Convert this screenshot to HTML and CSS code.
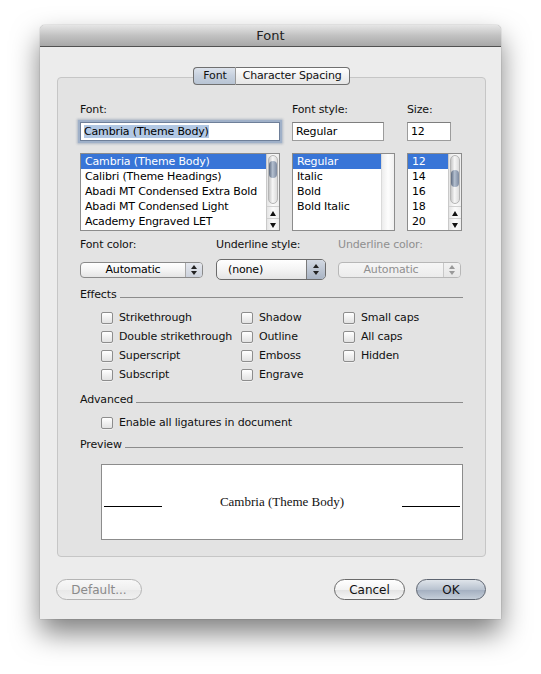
FILE: index.html
```html
<!DOCTYPE html>
<html>
<head>
<meta charset="utf-8">
<link rel="stylesheet" href="styles.css">
</head>
<body>
<div class="window">
  <div class="titlebar">Font</div>
  <div class="wbody">
    <div class="tabs">
      <span class="seg sel">Font</span><span class="seg">Character Spacing</span>
    </div>
    <div class="panel">
      <div class="top-grid">
        <div class="lbl">Font:</div>
        <div class="lbl">Font style:</div>
        <div class="lbl">Size:</div>

        <div class="field focus w-font"><span class="selected-text">Cambria (Theme Body)</span></div>
        <div class="field w-style">Regular</div>
        <div class="field w-size">12</div>

        <div class="list">
          <div class="rows">
            <div class="row sel">Cambria (Theme Body)</div>
            <div class="row">Calibri (Theme Headings)</div>
            <div class="row">Abadi MT Condensed Extra Bold</div>
            <div class="row">Abadi MT Condensed Light</div>
            <div class="row">Academy Engraved LET</div>
          </div>
          <div class="sbar">
            <div class="track"><div class="thumb"></div></div>
            <div class="arrow up"></div>
            <div class="arrow down"></div>
          </div>
        </div>
        <div class="list">
          <div class="rows">
            <div class="row sel">Regular</div>
            <div class="row">Italic</div>
            <div class="row">Bold</div>
            <div class="row">Bold Italic</div>
          </div>
          <div class="sbar empty"></div>
        </div>
        <div class="list">
          <div class="rows">
            <div class="row sel">12</div>
            <div class="row">14</div>
            <div class="row">16</div>
            <div class="row">18</div>
            <div class="row">20</div>
          </div>
          <div class="sbar">
            <div class="track"><div class="thumb low"></div></div>
            <div class="arrow up"></div>
            <div class="arrow down"></div>
          </div>
        </div>
      </div>

      <div class="pop-grid">
        <div class="lbl">Font color:</div>
        <div class="lbl">Underline style:</div>
        <div class="lbl dis">Underline color:</div>

        <div class="popup center"><span class="ptext">Automatic</span><span class="parrows"></span></div>
        <div class="popup big"><span class="ptext">(none)</span><span class="parrows"></span></div>
        <div class="popup center disabled"><span class="ptext">Automatic</span><span class="parrows"></span></div>
      </div>

      <div class="heading">Effects</div>
      <div class="effects">
        <label class="cb"><span class="box"></span>Strikethrough</label>
        <label class="cb"><span class="box"></span>Shadow</label>
        <label class="cb"><span class="box"></span>Small caps</label>
        <label class="cb"><span class="box"></span>Double strikethrough</label>
        <label class="cb"><span class="box"></span>Outline</label>
        <label class="cb"><span class="box"></span>All caps</label>
        <label class="cb"><span class="box"></span>Superscript</label>
        <label class="cb"><span class="box"></span>Emboss</label>
        <label class="cb"><span class="box"></span>Hidden</label>
        <label class="cb"><span class="box"></span>Subscript</label>
        <label class="cb"><span class="box"></span>Engrave</label>
      </div>

      <div class="heading adv">Advanced</div>
      <div class="effects single">
        <label class="cb"><span class="box"></span>Enable all ligatures in document</label>
      </div>

      <div class="heading prev">Preview</div>
      <div class="preview">
        <span class="pline"></span>
        <span class="ptxt">Cambria (Theme Body)</span>
        <span class="pline"></span>
      </div>
    </div>

    <div class="buttons">
      <button class="btn default-btn">Default...</button>
      <div class="spacer"></div>
      <button class="btn cancel">Cancel</button>
      <button class="btn ok">OK</button>
    </div>
  </div>
</div>
</body>
</html>
```

FILE: styles.css
```css
html, body {
  margin: 0;
  padding: 0;
  background: #ffffff;
}
body {
  width: 541px;
  height: 674px;
  overflow: hidden;
  font-family: "DejaVu Sans", "Liberation Sans", sans-serif;
  font-size: 11px;
  letter-spacing: -0.15px;
  color: #000;
}
.window {
  margin-left: 40px;
  margin-top: 25px;
  width: 461px;
  height: 594px;
  background: #ececec;
  border-radius: 5px 5px 0 0;
  box-shadow: 0 14px 28px rgba(0,0,0,0.5), 0 0 1px rgba(0,0,0,0.6);
  display: flex;
  flex-direction: column;
}
.titlebar {
  height: 21px;
  line-height: 21px;
  text-align: center;
  font-size: 13px;
  letter-spacing: 0;
  color: #222;
  background: linear-gradient(#e6e6e6, #c2c2c2 50%, #a8a8a8);
  border-bottom: 1px solid #515151;
  border-radius: 5px 5px 0 0;
}
.wbody {
  flex: 1;
  display: flex;
  flex-direction: column;
  padding: 20px 15px 20px 16px;
}
.tabs {
  display: flex;
  justify-content: center;
  position: relative;
  z-index: 2;
  margin-left: 1px;
}
.seg {
  height: 16px;
  line-height: 16px;
  padding: 0 7px;
  border: 1px solid #707070;
  background: linear-gradient(#ffffff, #f1f1f1 50%, #e6e6e6);
  color: #111;
}
.seg:first-child {
  border-radius: 4px 0 0 4px;
  border-right-color: #9a9a9a;
  padding: 0 8px 0 9px;
}
.seg:last-child {
  border-left: none;
  border-radius: 0 4px 4px 0;
}
.seg.sel {
  background: linear-gradient(#dde3ec, #c6d0de 50%, #b8c4d4);
}
.panel {
  margin-top: -8px;
  margin-left: 1px;
  height: 480px;
  box-sizing: border-box;
  background: #e3e3e3;
  border: 1px solid #c6c6c6;
  border-radius: 4px;
  padding: 25px 22px 0 22px;
}
.lbl {
  line-height: 14px;
  color: #111;
}
.lbl.dis { color: #8f8f8f; }
.top-grid {
  display: grid;
  grid-template-columns: 200px 103px 55px;
  column-gap: 12px;
  grid-template-rows: 14px 19px auto;
  row-gap: 5px;
}
.top-grid .list { margin-top: 7px; }
.field {
  height: 19px;
  box-sizing: border-box;
  background: #fff;
  border: 1px solid #9c9c9c;
  border-top-color: #7e7e7e;
  line-height: 17px;
  padding-left: 3px;
  white-space: nowrap;
  overflow: hidden;
}
.field.focus {
  border-color: #6e7f99;
  box-shadow: 0 0 0 2px #9fb0c8, 0 0 2px 3px rgba(110,130,160,0.45);
}
.w-font { width: 200px; }
.w-style { width: 92px; }
.w-size { width: 44px; }
.selected-text {
  background: #b2c8e4;
}
.list {
  height: 78px;
  box-sizing: border-box;
  border: 1px solid #8c8c8c;
  background: #fff;
  display: flex;
  overflow: hidden;
}
.rows { flex: 1; }
.row {
  height: 15px;
  line-height: 15px;
  padding-left: 4px;
  white-space: nowrap;
}
.row.sel {
  background: #3875d7;
  color: #fff;
}
.sbar {
  width: 12px;
  border-left: 1px solid #c9c9c9;
  background: linear-gradient(90deg, #e4e4e4, #fbfbfb 50%, #eeeeee);
  display: flex;
  flex-direction: column;
}
.sbar.empty {
  background: linear-gradient(90deg, #ececec, #fdfdfd 50%, #f0f0f0);
  border-left-color: #dadada;
}
.track {
  height: 52px;
  padding-top: 1px;
  box-sizing: border-box;
}
.thumb {
  margin: 0 1px;
  height: 49px;
  border-radius: 6px;
  background: linear-gradient(90deg, #c8c8c8, #f6f6f6 45%, #dcdcdc);
  border: 1px solid #b5b5b5;
  box-sizing: border-box;
  position: relative;
}
.thumb::after {
  content: "";
  position: absolute;
  left: 0;
  right: 0;
  top: 5px;
  height: 17px;
  border-radius: 5px;
  background: linear-gradient(90deg, #5e6b80, #b3bfcf 45%, #7d8aa0);
}
.thumb.low::after { top: 14px; }
.arrow {
  flex: 1;
  position: relative;
  border-top: 1px solid #d0d0d0;
}
.arrow::after {
  content: "";
  position: absolute;
  left: 3px;
  top: 4px;
  border-left: 3px solid transparent;
  border-right: 3px solid transparent;
}
.arrow.up::after { border-bottom: 5px solid #111; }
.arrow.down::after { border-top: 5px solid #111; }

.pop-grid {
  display: grid;
  grid-template-columns: 123px 111px 123px;
  column-gap: 12px;
  grid-template-rows: 14px 21px;
  row-gap: 7px;
  margin-top: 7px;
  align-items: center;
}
.pop-grid > :nth-child(3n+2) { margin-left: 1px; }
.popup {
  height: 16px;
  box-sizing: border-box;
  border: 1px solid #8a8a8a;
  border-radius: 4px;
  background: linear-gradient(#ffffff, #f4f4f4 50%, #e5e5e5);
  display: flex;
  line-height: 14px;
  overflow: hidden;
}
.popup .ptext {
  flex: 1;
  text-align: center;
}
.popup.big {
  height: 21px;
  line-height: 19px;
  border-color: #6b6b6b;
  border-radius: 5px;
}
.popup.big .ptext {
  text-align: left;
  padding-left: 11px;
}
.parrows {
  width: 16px;
  border-left: 1px solid #a8a8a8;
  background: linear-gradient(#e5e8ee, #cdd3dd);
  position: relative;
}
.popup.big .parrows {
  width: 18px;
  background: linear-gradient(#d3d9e3, #a9b4c4);
  border-left-color: #7a7a7a;
}
.parrows::before, .parrows::after {
  content: "";
  position: absolute;
  left: 50%;
  margin-left: -3px;
  border-left: 3px solid transparent;
  border-right: 3px solid transparent;
}
.parrows::before { top: 2px; border-bottom: 4px solid #222; }
.parrows::after { bottom: 2px; border-top: 4px solid #222; }
.popup.big .parrows::before { top: 4px; }
.popup.big .parrows::after { bottom: 4px; }
.popup.disabled {
  border-color: #b7b7b7;
  color: #8f8f8f;
  background: linear-gradient(#f6f6f6, #ececec);
}
.popup.disabled .parrows {
  background: linear-gradient(#f2f2f2, #e6e6e6);
  border-left-color: #c8c8c8;
}
.popup.disabled .parrows::before { border-bottom-color: #999; }
.popup.disabled .parrows::after { border-top-color: #999; }

.heading {
  display: flex;
  align-items: center;
  line-height: 14px;
  margin-top: 8px;
  color: #111;
}
.heading::after {
  content: "";
  flex: 1;
  height: 1px;
  background: #8c8c8c;
  margin-left: 3px;
  margin-top: 4px;
}
.heading.adv { margin-top: 9px; }
.heading.prev { margin-top: 6px; }
.effects {
  display: grid;
  grid-template-columns: 140px 102px auto;
  grid-auto-rows: 19px;
  padding-left: 21px;
  margin-top: 6px;
}
.effects.single { grid-template-columns: auto; }
.cb {
  display: flex;
  align-items: center;
  white-space: nowrap;
  color: #111;
}
.box {
  width: 12px;
  height: 12px;
  box-sizing: border-box;
  border: 1px solid #8d8d8d;
  border-radius: 2px;
  background: linear-gradient(#ffffff, #f0f0f0 50%, #e2e2e2);
  margin-right: 6px;
  box-shadow: 0 1px 0 rgba(255,255,255,0.5);
}
.preview {
  margin-top: 12px;
  margin-left: 21px;
  height: 76px;
  box-sizing: border-box;
  border: 1px solid #8c8c8c;
  background: #fff;
  display: flex;
  align-items: center;
  padding: 0 2px;
}
.pline {
  width: 58px;
  height: 1px;
  background: #000;
  margin-top: 8px;
}
.ptxt {
  flex: 1;
  text-align: center;
  font-family: "Liberation Serif", "DejaVu Serif", serif;
  font-size: 13px;
  letter-spacing: 0;
  color: #111;
}
.buttons {
  display: flex;
  align-items: center;
  margin-top: 22px;
}
.spacer { flex: 1; }
.btn {
  font-family: "DejaVu Sans", "Liberation Sans", sans-serif;
  font-size: 12px;
  height: 21px;
  border-radius: 11px;
  border: 1px solid #6a6a6a;
  background: linear-gradient(#ffffff, #f3f3f3 50%, #e2e2e2 51%, #f6f6f6);
  color: #111;
  padding: 0;
  margin: 0;
}
.default-btn {
  width: 86px;
  border-color: #b4b4b4;
  color: #8a8a8a;
  background: linear-gradient(#f8f8f8, #efefef 50%, #e8e8e8 51%, #f0f0f0);
}
.cancel { width: 71px; }
.ok {
  width: 70px;
  margin-left: 11px;
  background: linear-gradient(#dfe4ea, #b9c3d0 50%, #a2aebf 51%, #c5ced9);
  border-color: #5d6470;
}
```
